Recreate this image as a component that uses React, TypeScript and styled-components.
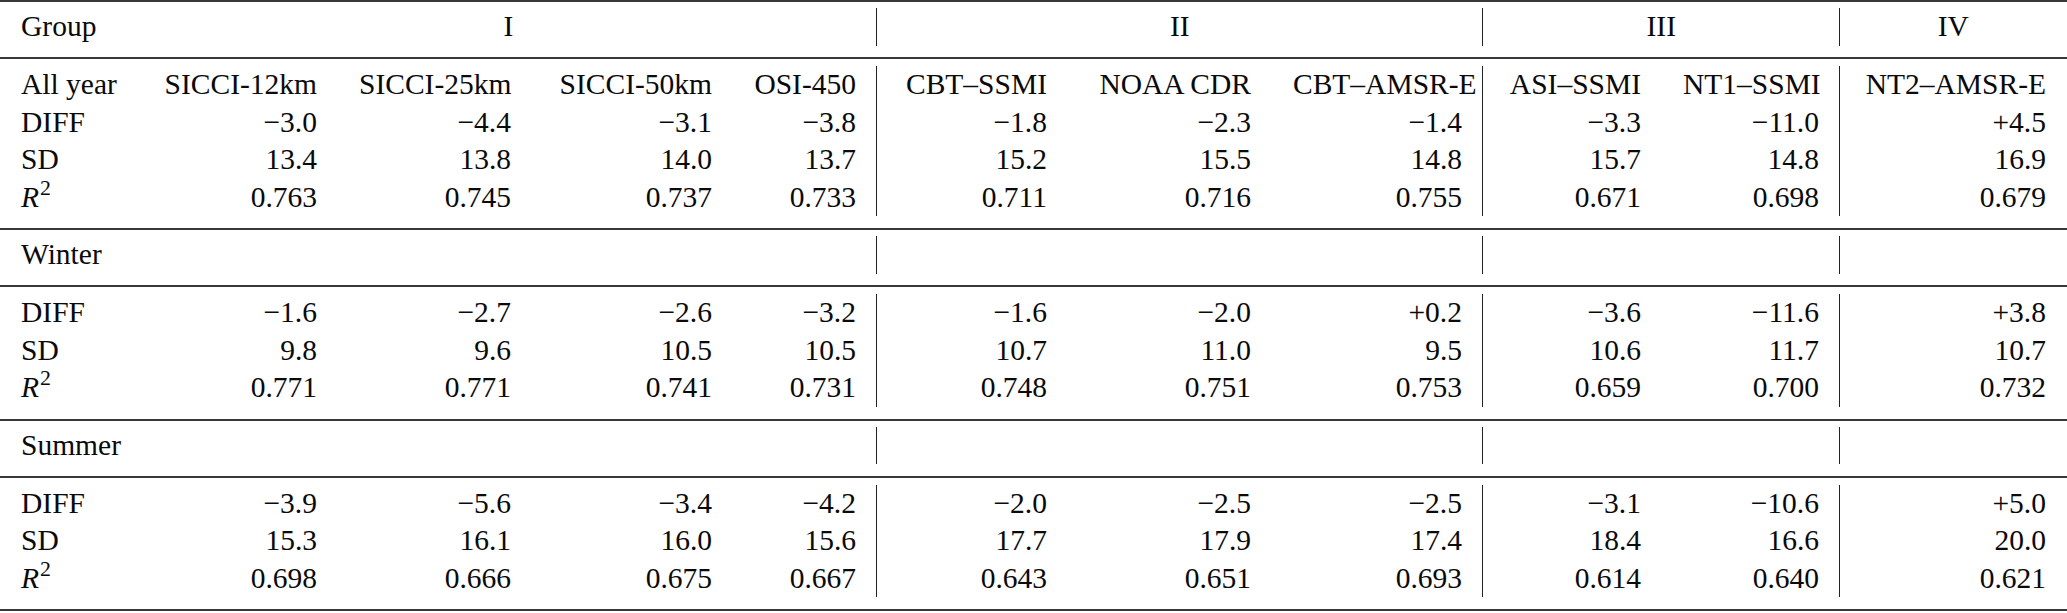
import React from "react";
import styled, { createGlobalStyle } from "styled-components";

const GlobalStyle = createGlobalStyle`
    html, body {
        margin: 0;
        padding: 0;
        background: #fff;
    }
`;

// column widths taken from the printed table (label + 10 products)
const COLUMNS = "140px 198px 194px 201px 144px 191px 204px 211px 179px 178px 227px";
const RULE = "#383838";

const groups = [
    { name: "I", span: 4, rule: false },
    { name: "II", span: 3, rule: true },
    { name: "III", span: 2, rule: true },
    { name: "IV", span: 1, rule: true },
];

// first column of groups II, III and IV gets a vertical line
const ruleCols = [4, 7, 9];

const products = [
    "SICCI-12km",
    "SICCI-25km",
    "SICCI-50km",
    "OSI-450",
    "CBT–SSMI",
    "NOAA CDR",
    "CBT–AMSR-E",
    "ASI–SSMI",
    "NT1–SSMI",
    "NT2–AMSR-E",
];

type Stats = { diff: string[]; sd: string[]; r2: string[] };

const seasons: { name: string; stats: Stats }[] = [
    {
        name: "All year",
        stats: {
            diff: ["−3.0", "−4.4", "−3.1", "−3.8", "−1.8", "−2.3", "−1.4", "−3.3", "−11.0", "+4.5"],
            sd: ["13.4", "13.8", "14.0", "13.7", "15.2", "15.5", "14.8", "15.7", "14.8", "16.9"],
            r2: ["0.763", "0.745", "0.737", "0.733", "0.711", "0.716", "0.755", "0.671", "0.698", "0.679"],
        },
    },
    {
        name: "Winter",
        stats: {
            diff: ["−1.6", "−2.7", "−2.6", "−3.2", "−1.6", "−2.0", "+0.2", "−3.6", "−11.6", "+3.8"],
            sd: ["9.8", "9.6", "10.5", "10.5", "10.7", "11.0", "9.5", "10.6", "11.7", "10.7"],
            r2: ["0.771", "0.771", "0.741", "0.731", "0.748", "0.751", "0.753", "0.659", "0.700", "0.732"],
        },
    },
    {
        name: "Summer",
        stats: {
            diff: ["−3.9", "−5.6", "−3.4", "−4.2", "−2.0", "−2.5", "−2.5", "−3.1", "−10.6", "+5.0"],
            sd: ["15.3", "16.1", "16.0", "15.6", "17.7", "17.9", "17.4", "18.4", "16.6", "20.0"],
            r2: ["0.698", "0.666", "0.675", "0.667", "0.643", "0.651", "0.693", "0.614", "0.640", "0.621"],
        },
    },
];

const RSquared = () => (
    <>
        <Italic>R</Italic>
        <Sup>2</Sup>
    </>
);

const GroupRow = ({ label, showNames }: { label: string; showNames: boolean }) => (
    <HeadBlock>
        <Cell>{label}</Cell>
        {groups.map((g) => (
            <Cell key={g.name} $span={g.span} $align="center" $rule={g.rule}>
                {showNames ? g.name : ""}
            </Cell>
        ))}
    </HeadBlock>
);

const DataRow = ({ label, values }: { label: React.ReactNode; values: string[] }) => (
    <>
        <Cell>{label}</Cell>
        {values.map((v, i) => (
            <Cell key={i} $align="right" $rule={ruleCols.includes(i)}>
                {v}
            </Cell>
        ))}
    </>
);

const App = () => {
    return (
        <>
            <GlobalStyle />
            <Table>
                <GroupRow label="Group" showNames />
                {seasons.map((s, idx) => (
                    <React.Fragment key={s.name}>
                        {idx > 0 && <GroupRow label={s.name} showNames={false} />}
                        <DataBlock>
                            {idx === 0 && <DataRow label={s.name} values={products} />}
                            <DataRow label="DIFF" values={s.stats.diff} />
                            <DataRow label="SD" values={s.stats.sd} />
                            <DataRow label={<RSquared />} values={s.stats.r2} />
                        </DataBlock>
                    </React.Fragment>
                ))}
            </Table>
        </>
    );
};

const Table = styled.div`
    width: 2067px;
    display: flex;
    flex-direction: column;
    border-top: 2px solid ${RULE};
    font-family: "Liberation Serif", "Times New Roman", serif;
    font-size: 29.5px;
    line-height: 37.5px;
    color: #0a0a0a;
`;

const HeadBlock = styled.div`
    display: grid;
    grid-template-columns: ${COLUMNS};
    padding: 6px 0 11.5px;
    border-bottom: 2px solid ${RULE};
`;

const DataBlock = styled.div`
    display: grid;
    grid-template-columns: ${COLUMNS};
    grid-auto-rows: 37.5px;
    padding: 7px 0 12px;
    border-bottom: 2px solid ${RULE};
`;

const Cell = styled.div<{ $align?: "left" | "right" | "center"; $rule?: boolean; $span?: number }>`
    padding: 0 21px;
    white-space: nowrap;
    text-align: ${(p) => p.$align || "left"};
    grid-column: ${(p) => (p.$span ? `span ${p.$span}` : "auto")};
    border-left: ${(p) => (p.$rule ? "1.5px solid #222" : "none")};
    margin-left: ${(p) => (p.$rule ? "-1.5px" : "0")};
`;

const Italic = styled.span`
    font-style: italic;
`;

const Sup = styled.sup`
    font-size: 0.74em;
    line-height: 0;
    vertical-align: 0.55em;
    margin-left: 1px;
`;

export default App;
